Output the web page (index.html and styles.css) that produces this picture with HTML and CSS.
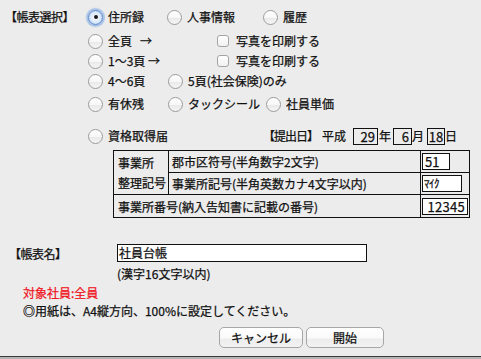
FILE: index.html
```html
<!DOCTYPE html>
<html lang="ja">
<head>
<meta charset="utf-8">
<link rel="stylesheet" href="styles.css">
</head>
<body>
<div class="window">
  <div class="select">
    <div class="sel-label">【帳表選択】</div>
    <div class="options">
      <div class="row r1">
        <label class="opt w79"><span class="radio on"></span>住所録</label>
        <label class="opt w96"><span class="radio"></span>人事情報</label>
        <label class="opt"><span class="radio"></span>履歴</label>
      </div>
      <div class="row r2">
        <label class="opt w127"><span class="radio"></span>全頁&nbsp;&nbsp;&nbsp;→</label>
        <label class="opt"><span class="check"></span>写真を印刷する</label>
      </div>
      <div class="row r3">
        <label class="opt w127"><span class="radio"></span>1〜3頁 →</label>
        <label class="opt"><span class="check"></span>写真を印刷する</label>
      </div>
      <div class="row r4">
        <label class="opt w80"><span class="radio"></span>4〜6頁</label>
        <label class="opt"><span class="radio"></span>5頁(社会保険)のみ</label>
      </div>
      <div class="row r5">
        <label class="opt w80"><span class="radio"></span>有休残</label>
        <label class="opt w98"><span class="radio"></span>タックシール</label>
        <label class="opt"><span class="radio"></span>社員単価</label>
      </div>
      <div class="row r6">
        <label class="opt w177"><span class="radio"></span>資格取得届</label>
        <div class="date">
          <span class="date-label">【提出日】</span>
          <span class="era">平成</span>
          <span class="box b-y">29</span><span>年</span>
          <span class="box b-m">6</span><span>月</span>
          <span class="box b-d">18</span><span>日</span>
        </div>
      </div>
    </div>
  </div>

  <table class="office">
    <tr class="tr1">
      <td class="c-left" rowspan="2">事業所<br>整理記号</td>
      <td class="c-mid">郡市区符号(半角数字2文字)</td>
      <td class="c-in"><span class="field f1">51</span></td>
    </tr>
    <tr class="tr2">
      <td class="c-mid">事業所記号(半角英数カナ4文字以内)</td>
      <td class="c-in"><span class="field f2">ﾏｲｸ</span></td>
    </tr>
    <tr class="tr3">
      <td class="c-wide" colspan="2">事業所番号(納入告知書に記載の番号)</td>
      <td class="c-in"><span class="field f3">12345</span></td>
    </tr>
  </table>

  <div class="name-row">
    <span class="name-label">【帳表名】</span>
    <span class="name-input">社員台帳</span>
  </div>
  <div class="hint">(漢字16文字以内)</div>
  <div class="target">対象社員:全員</div>
  <div class="notice">◎用紙は、A4縦方向、100%に設定してください。</div>

  <div class="buttons">
    <button class="btn btn-cancel">キャンセル</button>
    <button class="btn btn-start">開始</button>
  </div>

  <div class="behind"></div>
</div>
</body>
</html>
```

FILE: styles.css
```css
* { box-sizing: border-box; }
html, body { margin: 0; padding: 0; }
body {
  font-family: "Noto Sans CJK JP", "Noto Sans", sans-serif;
  font-size: 12px;
  color: #111;
  background: #ececec;
  -webkit-text-stroke: 0.25px currentColor;
}
.window {
  width: 481px;
  height: 359px;
  background: #ececec;
  overflow: hidden;
  display: flex;
  flex-direction: column;
}
.select {
  display: flex;
  padding-top: 7px;
}
.sel-label {
  width: 88px;
  padding-left: 5px;
  height: 20px;
  line-height: 20px;
  letter-spacing: -0.5px;
}
.options { display: flex; flex-direction: column; }
.row {
  display: flex;
  align-items: center;
  height: 20px;
  white-space: nowrap;
}
.r2 { margin-top: 4px; }
.r5 { margin-top: 3px; }
.r6 { margin-top: 12px; }
.opt {
  display: flex;
  align-items: center;
  line-height: 20px;
}
.w79 { width: 79px; }
.w96 { width: 96px; }
.w127 { width: 128px; }
.w80 { width: 80px; }
.w98 { width: 98px; }
.w177 { width: 177px; }

.radio {
  width: 15px;
  height: 15px;
  border-radius: 50%;
  border: 1px solid #9c9c9c;
  background: linear-gradient(#ffffff 0%, #f7f7f7 50%, #e9e9e9 55%, #f6f6f6 100%);
  margin-right: 5px;
  position: relative;
  flex: none;
}
.radio.on {
  border-color: #5a86c6;
  background: radial-gradient(circle, #ffffff 0%, #d6e6f8 60%, #9cc0ec 100%);
  box-shadow: 0 0 1px 2px rgba(110, 160, 230, 0.55);
}
.radio.on::after {
  content: "";
  position: absolute;
  left: 4.5px;
  top: 4.5px;
  width: 4px;
  height: 4px;
  border-radius: 50%;
  background: #1a1a1a;
}
.check {
  width: 12px;
  height: 12px;
  border: 1px solid #a4a4a4;
  border-radius: 3px;
  background: linear-gradient(#ffffff, #f0f0f0);
  margin-right: 7px;
  margin-left: 1px;
  flex: none;
}

.date {
  display: flex;
  align-items: center;
  line-height: 18px;
}
.date-label { margin-right: 4px; letter-spacing: -1px; margin-left: -2px; }
.era { margin-right: 7px; }
.box {
  height: 17px;
  background: transparent;
  border: 1px solid #111;
  text-align: right;
  padding-right: 2px;
  line-height: 15px;
  font-size: 13px;
}
.b-y { width: 25px; margin-right: 1px; }
.b-m { width: 19px; margin-left: 2px; }
.b-d { width: 18px; margin-left: 3px; text-align: center; padding: 0; }

.office {
  margin-top: 4px;
  margin-left: 113px;
  width: 357px;
  border-collapse: collapse;
  border: 1px solid #111;
}
.office td {
  border: 1px solid #111;
  padding: 0;
  white-space: nowrap;
}
.tr1 td, .tr2 td { height: 22px; }
.tr3 td { height: 23px; }
.c-left {
  width: 55px;
  padding-left: 4px !important;
  line-height: 20px;
  vertical-align: middle;
}
.c-mid { padding-left: 3px !important; }
.c-wide { padding-left: 4px !important; }
.c-in { width: 49px; padding-left: 1px !important; }
.field {
  display: block;
  background: #fff;
  border: 1px solid #111;
  height: 17px;
  line-height: 15px;
  font-size: 13px;
}
.f1 { width: 28px; padding-left: 2px; }
.f2 { width: 40px; font-size: 11px; padding-left: 1px; letter-spacing: -0.5px; }
.f3 { width: 46px; text-align: right; padding-right: 2px; letter-spacing: 0.3px; }

.name-row {
  display: flex;
  align-items: center;
  margin-top: 26px;
  height: 18px;
}
.name-label { width: 117px; padding-left: 9px; letter-spacing: -0.5px; }
.name-input {
  width: 250px;
  height: 18px;
  background: #fff;
  border: 1px solid #111;
  line-height: 16px;
  padding-left: 1px;
}
.hint {
  margin-top: 3px;
  margin-left: 117px;
  line-height: 18px;
  height: 18px;
}
.target {
  margin-top: 1px;
  margin-left: 23px;
  color: #f0141e;
  line-height: 18px;
  height: 18px;
}
.notice {
  margin-left: 23px;
  line-height: 18px;
  height: 18px;
}
.buttons {
  display: flex;
  gap: 3px;
  margin-top: 7px;
  margin-left: 219px;
}
.btn {
  font-family: inherit;
  font-size: 12px;
  color: #111;
  -webkit-text-stroke: 0.25px currentColor;
  height: 21px;
  border: 1px solid #a6a6a6;
  border-radius: 5px;
  background: linear-gradient(#ffffff 0%, #fafafa 50%, #ededed 60%, #f2f2f2 100%);
  padding: 0;
  line-height: 19px;
}
.btn-cancel { width: 84px; }
.btn-start { width: 78px; }
.behind {
  margin-top: auto;
  height: 3px;
  border-top: 1px solid #3a3a3a;
  background: #b4b4b4;
}
```
